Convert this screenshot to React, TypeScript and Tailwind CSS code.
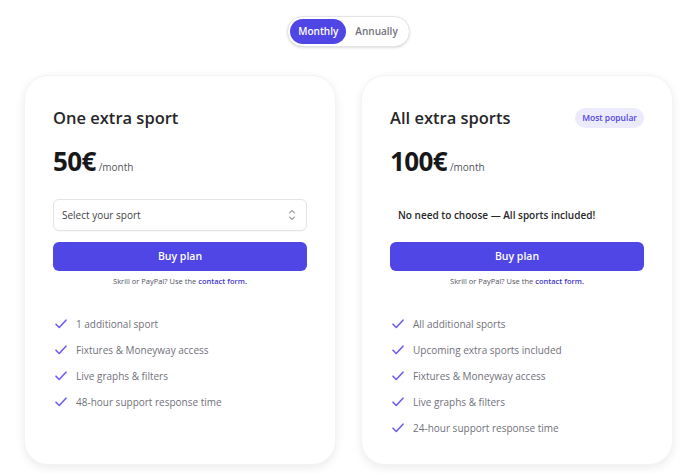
import { useState } from 'react';

const PLANS = [
  {
    name: 'One extra sport',
    price: '50€',
    popular: false,
    features: [
      '1 additional sport',
      'Fixtures & Moneyway access',
      'Live graphs & filters',
      '48-hour support response time',
    ],
  },
  {
    name: 'All extra sports',
    price: '100€',
    popular: true,
    features: [
      'All additional sports',
      'Upcoming extra sports included',
      'Fixtures & Moneyway access',
      'Live graphs & filters',
      '24-hour support response time',
    ],
  },
];

function Check() {
  return (
    <svg width="12" height="10" viewBox="0 0 12 10" fill="none" stroke="#6d5ef0" strokeWidth={1.6} strokeLinecap="round" strokeLinejoin="round" className="flex-shrink-0">
      <path d="M1 5.2l3.2 3.3L11 1.2" />
    </svg>
  );
}

function UpDown() {
  return (
    <svg width="8" height="12" viewBox="0 0 8 12" fill="none" stroke="#a1a1aa" strokeWidth={1.1} strokeLinecap="round" strokeLinejoin="round">
      <path d="M1.5 4L4 1.5 6.5 4" />
      <path d="M1.5 8L4 10.5 6.5 8" />
    </svg>
  );
}

export default function App() {
  const [period, setPeriod] = useState<'monthly' | 'annually'>('monthly');

  return (
    <main className="min-h-screen bg-white pt-[16px]" style={{ fontFamily: '"Open Sans", "Noto Sans", sans-serif' }}>
      <div className="ml-[24px] w-[649px]">
        {/* Billing toggle */}
        <div className="flex justify-center">
          <div className="flex items-center rounded-full border border-zinc-200 bg-white p-[2px] shadow-sm">
            <button
              onClick={() => setPeriod('monthly')}
              className={`h-[25px] px-[8px] rounded-full text-[10px] font-semibold ${period === 'monthly' ? 'bg-[#4f46e5] text-white' : 'text-zinc-500'}`}
            >
              Monthly
            </button>
            <button
              onClick={() => setPeriod('annually')}
              className={`h-[25px] px-[9px] rounded-full text-[10px] font-semibold ${period === 'annually' ? 'bg-[#4f46e5] text-white' : 'text-zinc-500'}`}
            >
              Annually
            </button>
          </div>
        </div>

        {/* Plans */}
        <div className="mt-[28px] flex gap-[25px]">
          {PLANS.map((p) => (
            <div key={p.name} className="w-[312px] h-[390px] rounded-[24px] border border-zinc-100 bg-white shadow-[0_3px_10px_rgba(0,0,0,0.08)] px-[28px] pt-[30px]">
              <div className="flex items-center justify-between h-[24px]">
                <h2 className="text-[16.5px] font-semibold text-zinc-800">{p.name}</h2>
                {p.popular && (
                  <span className="rounded-full bg-[#ecebfd] px-[7px] py-[4px] text-[8.5px] font-semibold leading-[12px] text-[#5145e0]">Most popular</span>
                )}
              </div>

              <div className="mt-[18px] flex items-baseline gap-[3px]">
                <span className="text-[26px] font-bold leading-none text-zinc-900 tracking-tight">{p.price}</span>
                <span className="text-[10px] text-zinc-600">/month</span>
              </div>

              <div className="mt-[24px] h-[32px] flex items-center">
                {p.popular ? (
                  <p className="pl-[8px] text-[10px] font-semibold text-zinc-800">No need to choose — All sports included!</p>
                ) : (
                  <div className="w-full h-[32px] rounded-md border border-zinc-200 flex items-center justify-between pl-[8px] pr-[10px] shadow-[0_1px_1px_rgba(0,0,0,0.03)]">
                    <span className="text-[10px] text-zinc-700">Select your sport</span>
                    <UpDown />
                  </div>
                )}
              </div>

              <button className="mt-[11px] w-full h-[29px] rounded-md bg-[#4f46e5] text-white text-[10.5px] font-semibold">
                Buy plan
              </button>
              <p className="mt-[5px] text-center text-[7.5px] text-zinc-600">
                Skrill or PayPal? Use the <span className="font-semibold text-[#4338ca]">contact form.</span>
              </p>

              <ul className="mt-[29px] flex flex-col gap-[10px]">
                {p.features.map((f) => (
                  <li key={f} className="flex items-center gap-[9px] h-[16px] pl-[2px]">
                    <Check />
                    <span className="text-[10px] text-zinc-500">{f}</span>
                  </li>
                ))}
              </ul>
            </div>
          ))}
        </div>
      </div>
    </main>
  );
}
